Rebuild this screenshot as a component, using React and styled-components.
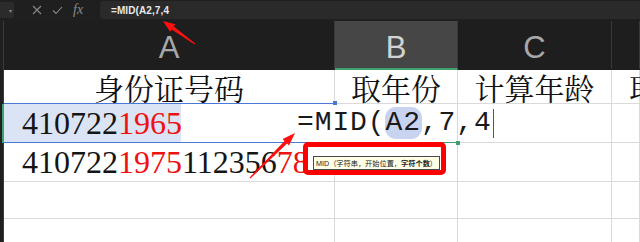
import React from 'react'
import styled, { createGlobalStyle } from 'styled-components'

const GlobalStyle = createGlobalStyle`
  html, body {
    margin: 0;
    padding: 0;
    background: #1e1e1e;
  }
  * { box-sizing: border-box; }
`

const CJK_SERIF = `"Noto Serif CJK SC", "Liberation Serif", "Noto Sans CJK SC", serif`

const Screen = styled.div`
  position: relative;
  width: 640px;
  height: 242px;
  overflow: hidden;
  background: #1e1e1e;
  font-family: "Liberation Sans", "Noto Sans CJK SC", sans-serif;
`

const FormulaBar = styled.div`
  display: flex;
  align-items: center;
  height: 21px;
  padding: 1px 0 2px;
  background: #1f1f1f;
`

const NameBox = styled.div`
  width: 14px;
  height: 16px;
  background: #2b2b2b;
  border-radius: 0 2px 2px 0;
  display: flex;
  align-items: center;
  justify-content: flex-end;
  padding-right: 2px;
  color: #8c8c8c;
  font-size: 6px;
`

const BarIcons = styled.div`
  display: flex;
  align-items: center;
  gap: 10px;
  margin-left: 18px;
  width: 68px;
  color: #8a8a8a;
`

const FxLabel = styled.span`
  font-family: "Liberation Serif", serif;
  font-style: italic;
  font-size: 14px;
  color: #8a8a8a;
  line-height: 1;
`

const FormulaInput = styled.div`
  flex: 1;
  height: 18px;
  background: #2a2a2a;
  border-radius: 3px 0 0 3px;
  display: flex;
  align-items: center;
  padding-left: 11px;
  color: #e8e8e8;
  font-size: 10px;
  font-weight: bold;
  letter-spacing: 0.1px;
`

const Sheet = styled.div`
  display: grid;
  grid-template-columns: 4px 331px 123px 154px 28px;
  grid-template-rows: 49px 34px 39px 39px 37px 30px;
  background: #ffffff;
`

const RowHead = styled.div`
  background: #202020;
  border-right: 1px solid ${p => (p.$active ? '#3fa16e' : '#3a3a3a')};
  ${p => p.$active && 'border-right-width: 2px;'}
`

const ColHead = styled.div`
  display: flex;
  align-items: center;
  justify-content: center;
  background: ${p => (p.$active ? '#464646' : '#1e1e1e')};
  border-right: 1px solid #3a3a3a;
  border-bottom: 2px solid ${p => (p.$active ? '#3fa16e' : '#1e1e1e')};
  color: ${p => (p.$active ? '#d2d2d2' : '#a8a8a8')};
  font-size: 31px;
  padding-top: 6px;
`

const Cell = styled.div`
  position: relative;
  display: flex;
  align-items: center;
  justify-content: ${p => p.$justify || 'flex-start'};
  border-right: 1px solid #dadada;
  border-bottom: 1px solid #dadada;
  white-space: nowrap;
  overflow: visible;
  color: #111;
  min-width: 0;
`

const TitleCell = styled(Cell)`
  font-family: ${CJK_SERIF};
  font-size: 30px;
  line-height: 34px;
  padding-left: ${p => p.$indent || 0}px;
`

const SelectedCell = styled(Cell)`
  align-items: stretch;
  border-top: 1px solid #4a78d6;
  border-bottom: 1px solid #4a78d6;
  border-right: none;
  margin-top: -1px;
`

const SelFill = styled.div`
  display: flex;
  align-items: center;
  padding-left: 18px;
  width: 177px;
  background: #dbe4f5;
`

const Digits = styled.span`
  font-family: "Liberation Serif", serif;
  font-size: 32px;
  line-height: 1;
  color: ${p => (p.$red ? '#ee1111' : '#151515')};
`

const NumCell = styled(Cell)`
  padding-left: 18px;
  z-index: 1;
`

const EditCell = styled(Cell)`
  border-bottom: 1px solid #3fa16e;
  z-index: 2;
`

const EditText = styled.div`
  display: flex;
  align-items: center;
  margin-left: -38px;
  font-family: "Liberation Mono", monospace;
  font-size: 28px;
  letter-spacing: 0.9px;
  color: #1a1a1a;
  line-height: 1;
`

const RefPill = styled.span`
  background: #c8d4ef;
  border-radius: 11px;
  padding: 2px 1px;
  margin: 0 -1px;
`

const Caret = styled.span`
  display: inline-block;
  width: 1px;
  height: 29px;
  margin-left: 1px;
  background: #555;
`

const Handle = styled.span`
  position: absolute;
  width: 4px;
  height: 4px;
  background: ${p => p.$color};
  ${p => p.$pos}
`

const RedBox = styled.div`
  position: absolute;
  left: 303px;
  top: 142px;
  width: 143px;
  height: 33px;
  border: 5px solid #ff0000;
  border-radius: 5px;
  background: #ffffff;
  z-index: 5;
  padding: 5px 0 0 5px;
`

const Tip = styled.div`
  display: inline-flex;
  align-items: center;
  height: 14px;
  padding: 0 2px;
  background: #ffffe6;
  border: 1px solid #4a4a4a;
  font-family: "Liberation Sans", "Noto Sans CJK SC", sans-serif;
  font-size: 7.2px;
  color: #222;
  white-space: nowrap;
`

const Overlay = styled.svg`
  position: absolute;
  left: 0;
  top: 0;
  z-index: 6;
  pointer-events: none;
`

function arrowPoints(x1, y1, x2, y2, headLen, headHalf, shaftEnd) {
  const dx = x2 - x1
  const dy = y2 - y1
  const len = Math.hypot(dx, dy)
  const ux = dx / len
  const uy = dy / len
  const nx = -uy
  const ny = ux
  const bx = x2 - ux * headLen
  const by = y2 - uy * headLen
  const pts = [
    [x1 + nx * 0.5, y1 + ny * 0.5],
    [bx + nx * shaftEnd, by + ny * shaftEnd],
    [bx + nx * headHalf, by + ny * headHalf],
    [x2, y2],
    [bx - nx * headHalf, by - ny * headHalf],
    [bx - nx * shaftEnd, by - ny * shaftEnd],
    [x1 - nx * 0.5, y1 - ny * 0.5]
  ]
  return pts.map(p => p.map(v => v.toFixed(1)).join(',')).join(' ')
}

const XIcon = () => (
  <svg width="10" height="10" viewBox="0 0 10 10">
    <path d="M1 1 L9 9 M9 1 L1 9" stroke="#8a8a8a" strokeWidth="1.1" fill="none" />
  </svg>
)

const CheckIcon = () => (
  <svg width="11" height="9" viewBox="0 0 11 9">
    <path d="M1 4.5 L4 7.5 L10 1" stroke="#8a8a8a" strokeWidth="1.1" fill="none" />
  </svg>
)

const App = () => (
  <Screen>
    <GlobalStyle />
    <FormulaBar>
      <NameBox>▾</NameBox>
      <BarIcons>
        <XIcon />
        <CheckIcon />
        <FxLabel>fx</FxLabel>
      </BarIcons>
      <FormulaInput>=MID(A2,7,4</FormulaInput>
    </FormulaBar>

    <Sheet>
      <RowHead />
      <ColHead>A</ColHead>
      <ColHead $active>B</ColHead>
      <ColHead>C</ColHead>
      <ColHead />

      <RowHead />
      <TitleCell $justify="center">身份证号码</TitleCell>
      <TitleCell $justify="center">取年份</TitleCell>
      <TitleCell $justify="center">计算年龄</TitleCell>
      <TitleCell $indent={17}>取</TitleCell>

      <RowHead $active />
      <SelectedCell>
        <SelFill>
          <Digits>410722</Digits>
          <Digits $red>1965</Digits>
        </SelFill>
        <Handle $color="#4a78d6" $pos="right: -2px; top: -3px;" />
      </SelectedCell>
      <EditCell>
        <EditText>
          =MID(<RefPill>A2</RefPill>,7,4<Caret />
        </EditText>
        <Handle $color="#3fa16e" $pos="right: -3px; bottom: -3px;" />
      </EditCell>
      <Cell />
      <Cell />

      <RowHead />
      <NumCell>
        <Digits>410722</Digits>
        <Digits $red>1975</Digits>
        <Digits>112356</Digits>
        <Digits $red>78</Digits>
      </NumCell>
      <Cell />
      <Cell />
      <Cell />

      <RowHead />
      <Cell />
      <Cell />
      <Cell />
      <Cell />

      <RowHead />
      <Cell />
      <Cell />
      <Cell />
      <Cell />
    </Sheet>

    <RedBox>
      <Tip>
        MID（字符串，开始位置，<b>字符个数</b>）
      </Tip>
    </RedBox>

    <Overlay width="640" height="242" viewBox="0 0 640 242">
      <polygon points={arrowPoints(195, 44, 163, 21, 12, 4.5, 1.8)} fill="#ff1010" />
      <polygon points={arrowPoints(250, 178, 295, 133, 13, 4.5, 1.8)} fill="#ff1010" />
    </Overlay>
  </Screen>
)

export default App
